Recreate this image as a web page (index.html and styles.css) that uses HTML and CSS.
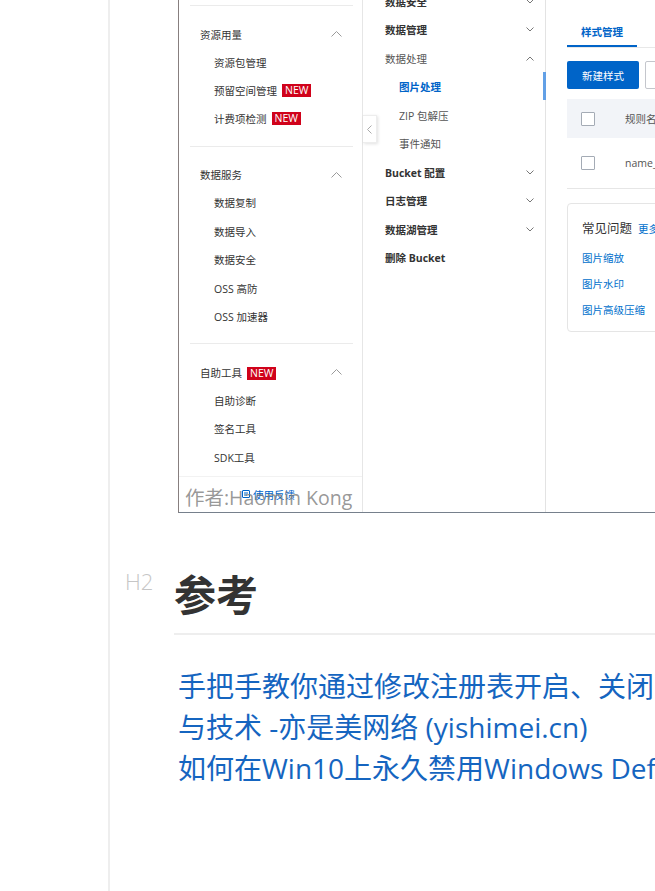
FILE: index.html
```html
<!DOCTYPE html>
<html lang="zh-CN">
<head>
<meta charset="utf-8">
<title>参考</title>
<link rel="stylesheet" href="styles.css">
</head>
<body>
<div class="app">
  <aside class="gutter"></aside>
  <main class="doc">
    <div class="shot">
      <nav class="menu">
        <div class="menu-top"></div>
        <section class="grp">
          <div class="grp-head"><span>资源用量</span><svg class="chev-up" width="11" height="6" viewBox="0 0 11 6"><polyline points="0.5,5.5 5.5,0.5 10.5,5.5"/></svg></div>
          <div class="item">资源包管理</div>
          <div class="item">预留空间管理<span class="new">NEW</span></div>
          <div class="item">计费项检测<span class="new">NEW</span></div>
        </section>
        <section class="grp">
          <div class="grp-head"><span>数据服务</span><svg class="chev-up" width="11" height="6" viewBox="0 0 11 6"><polyline points="0.5,5.5 5.5,0.5 10.5,5.5"/></svg></div>
          <div class="item">数据复制</div>
          <div class="item">数据导入</div>
          <div class="item">数据安全</div>
          <div class="item">OSS 高防</div>
          <div class="item">OSS 加速器</div>
        </section>
        <section class="grp grp-last">
          <div class="grp-head"><span>自助工具<span class="new">NEW</span></span><svg class="chev-up" width="11" height="6" viewBox="0 0 11 6"><polyline points="0.5,5.5 5.5,0.5 10.5,5.5"/></svg></div>
          <div class="item">自助诊断</div>
          <div class="item">签名工具</div>
          <div class="item">SDK工具</div>
        </section>
        <div class="foot"><svg class="fb-icon" width="8" height="9" viewBox="0 0 8 9"><rect x="0.5" y="0.5" width="7" height="7" rx="0.5"/><line x1="2" y1="3" x2="6" y2="3"/><line x1="2" y1="5" x2="5" y2="5"/></svg><span>使用反馈</span></div>
      </nav>

      <div class="subnav">
        <div class="thumb"></div>
        <div class="sn-list">
          <div class="sn bold"><span>数据安全</span><svg class="chev-dn" width="8" height="5" viewBox="0 0 8 5"><polyline points="0.5,0.5 4,4 7.5,0.5"/></svg></div>
          <div class="sn bold"><span>数据管理</span><svg class="chev-dn" width="8" height="5" viewBox="0 0 8 5"><polyline points="0.5,0.5 4,4 7.5,0.5"/></svg></div>
          <div class="sn"><span>数据处理</span><svg class="chev-dn" width="8" height="5" viewBox="0 0 8 5"><polyline points="0.5,4.5 4,1 7.5,4.5"/></svg></div>
          <div class="sn sub active"><span>图片处理</span></div>
          <div class="sn sub"><span>ZIP 包解压</span></div>
          <div class="sn sub"><span>事件通知</span></div>
          <div class="sn bold"><span>Bucket 配置</span><svg class="chev-dn" width="8" height="5" viewBox="0 0 8 5"><polyline points="0.5,0.5 4,4 7.5,0.5"/></svg></div>
          <div class="sn bold"><span>日志管理</span><svg class="chev-dn" width="8" height="5" viewBox="0 0 8 5"><polyline points="0.5,0.5 4,4 7.5,0.5"/></svg></div>
          <div class="sn bold"><span>数据湖管理</span><svg class="chev-dn" width="8" height="5" viewBox="0 0 8 5"><polyline points="0.5,0.5 4,4 7.5,0.5"/></svg></div>
          <div class="sn bold"><span>删除 Bucket</span></div>
        </div>
      </div>

      <div class="pane">
        <div class="tabs"><div class="tab">样式管理</div></div>
        <div class="toolbar">
          <div class="btn-primary">新建样式</div>
          <div class="btn"></div>
        </div>
        <div class="table">
          <div class="thead"><span class="cb"></span><span class="col-name">规则名称</span></div>
          <div class="trow"><span class="cb"></span><span class="col-name muted">name_</span></div>
        </div>
        <div class="card">
          <div class="card-title"><span>常见问题</span><a class="more" href="#">更多</a></div>
          <div class="faq">
            <a href="#">图片缩放</a>
            <a href="#">图片水印</a>
            <a href="#">图片高级压缩</a>
          </div>
        </div>
      </div>

      <button class="collapse"><svg width="5" height="9" viewBox="0 0 5 9"><polyline points="4.5,0.5 0.5,4.5 4.5,8.5"/></svg></button>
      <div class="watermark">作者:Haomin Kong</div>
    </div>

    <h2 class="h2"><span class="hlabel">H2</span>参考</h2>
    <p class="refs"><a href="#">手把手教你通过修改注册表开启、关闭<br>与技术 -亦是美网络 (yishimei.cn)</a><br><a href="#">如何在Win10上永久禁用Windows Defender</a></p>
  </main>
</div>
</body>
</html>
```

FILE: styles.css
```css
* { box-sizing: border-box; }
html, body { margin: 0; padding: 0; }
body {
  width: 655px;
  height: 891px;
  overflow: hidden;
  background: #fff;
  color: #333;
  font-family: "Open Sans", "Noto Sans CJK SC", sans-serif;
}
.app { display: flex; height: 891px; }
.gutter { flex: 0 0 110px; border-right: 2px solid #eeeeee; }
.doc { flex: 0 0 820px; padding-left: 68px; }

/* embedded screenshot */
.shot {
  position: relative;
  display: flex;
  width: 640px;
  height: 513px;
  border-left: 1px solid #877f7f;
  border-bottom: 1px solid #76808c;
  overflow: hidden;
  font-size: 10.5px;
  color: #333;
  background: #fff;
}
.menu {
  flex: 0 0 184px;
  display: flex;
  flex-direction: column;
  border-right: 1px solid #e6e6e6;
}
.menu-top { height: 6px; margin: 0 9px 0 11px; border-bottom: 1px solid #ebebeb; flex: none; }
.grp { margin: 0 9px 0 11px; padding: 14px 0 12.5px; border-bottom: 1px solid #ebebeb; flex: none; }
.grp-last { padding-bottom: 5px; border-bottom: none; }
.grp-head {
  height: 28px;
  display: flex;
  align-items: center;
  justify-content: space-between;
  padding: 0 11px 0 10px;
}
.item { height: 28.4px; display: flex; align-items: center; padding-left: 24px; }
.new {
  display: inline-block;
  margin-left: 5px;
  padding: 0 3px;
  height: 13px;
  line-height: 13px;
  background: #d0021b;
  color: #fff;
  font-size: 10.5px;
}
.chev-up polyline, .chev-dn polyline { fill: none; stroke: #9a9a9a; stroke-width: 1; }
.chev-dn polyline { stroke: #777; }
.foot {
  flex: 1;
  display: flex;
  align-items: center;
  gap: 3px;
  padding-left: 63px;
  border-top: 1px solid #f2f2f2;
  color: #0064c8;
}
.fb-icon rect, .fb-icon line { fill: none; stroke: #0064c8; stroke-width: 1; }

.subnav {
  position: relative;
  flex: 0 0 183px;
  border-right: 1px solid #e3e3e3;
}
.thumb {
  position: absolute;
  right: -1px;
  top: 72px;
  width: 3px;
  height: 28px;
  background: #62a0e6;
}
.sn-list { margin-top: -13px; }
.sn {
  height: 28.5px;
  display: flex;
  align-items: center;
  justify-content: space-between;
  padding: 0 11px 0 22px;
  color: #555;
}
.sn.bold { font-weight: 700; color: #333; }
.sn.sub { padding-left: 36px; }
.sn.active { color: #0064c8; font-weight: 700; }

.pane { flex: 1; padding-left: 21px; }
.tabs { height: 48px; padding-top: 18px; border-bottom: 1px solid #e8e8e8; display: flex; }
.tab {
  height: 29px;
  padding: 0 14px;
  display: flex;
  align-items: center;
  border-bottom: 2px solid #0064c8;
  color: #0064c8;
  font-weight: 700;
}
.toolbar { margin-top: 13px; display: flex; gap: 6px; }
.btn-primary {
  width: 72px;
  height: 28px;
  display: flex;
  align-items: center;
  justify-content: center;
  background: #0064c8;
  color: #fff;
  border-radius: 2px;
}
.btn { width: 80px; height: 28px; border: 1px solid #c4c6cc; border-radius: 2px; }
.table { margin-top: 10px; }
.thead {
  height: 39px;
  display: flex;
  align-items: center;
  padding-left: 14px;
  background: #f2f4f8;
  color: #555;
}
.trow {
  height: 51px;
  display: flex;
  align-items: center;
  padding-left: 14px;
  border-bottom: 1px solid #e6e6e6;
}
.cb {
  width: 14px;
  height: 14px;
  border: 1px solid #a4abb5;
  border-radius: 1px;
  background: #fff;
  flex: none;
}
.col-name { margin-left: 30px; white-space: nowrap; }
.muted { color: #555; }
.card {
  margin-top: 14px;
  border: 1px solid #e5e5e5;
  border-radius: 4px;
  padding: 15px 14px 8px;
}
.card-title { display: flex; align-items: center; gap: 6px; font-size: 12.5px; line-height: 20px; color: #333; white-space: nowrap; }
.card-title .more { font-size: 10.5px; color: #0070cc; text-decoration: none; }
.faq { margin-top: 6px; }
.faq a { display: block; line-height: 26px; color: #0070cc; text-decoration: none; }

.collapse {
  position: absolute;
  left: 184px;
  top: 115px;
  width: 14px;
  height: 28px;
  padding: 0;
  margin: 0;
  border: 1px solid #ededed;
  border-left: none;
  background: #fff;
  box-shadow: 1px 1px 3px rgba(0, 0, 0, 0.12);
  display: flex;
  align-items: center;
  justify-content: center;
}
.collapse polyline { fill: none; stroke: #aaa; stroke-width: 1; }
.watermark {
  position: absolute;
  left: 6px;
  top: 485px;
  font-size: 19.5px;
  line-height: 26px;
  color: rgba(125, 125, 125, 0.8);
  white-space: nowrap;
}

/* document */
.h2 {
  position: relative;
  margin: 52px 0 0 -4px;
  padding-bottom: 9px;
  border-bottom: 2px solid #eeeeee;
  font-size: 42px;
  line-height: 59px;
  font-weight: 700;
  color: #333;
}
.hlabel {
  position: absolute;
  left: -49px;
  top: 5px;
  font-size: 22px;
  line-height: 22px;
  font-weight: 300;
  color: #c6c6c6;
}
.refs {
  margin: 31px 0 0;
  font-size: 28px;
  line-height: 41px;
  white-space: nowrap;
}
.refs a { color: #1565c0; text-decoration: none; }
```
